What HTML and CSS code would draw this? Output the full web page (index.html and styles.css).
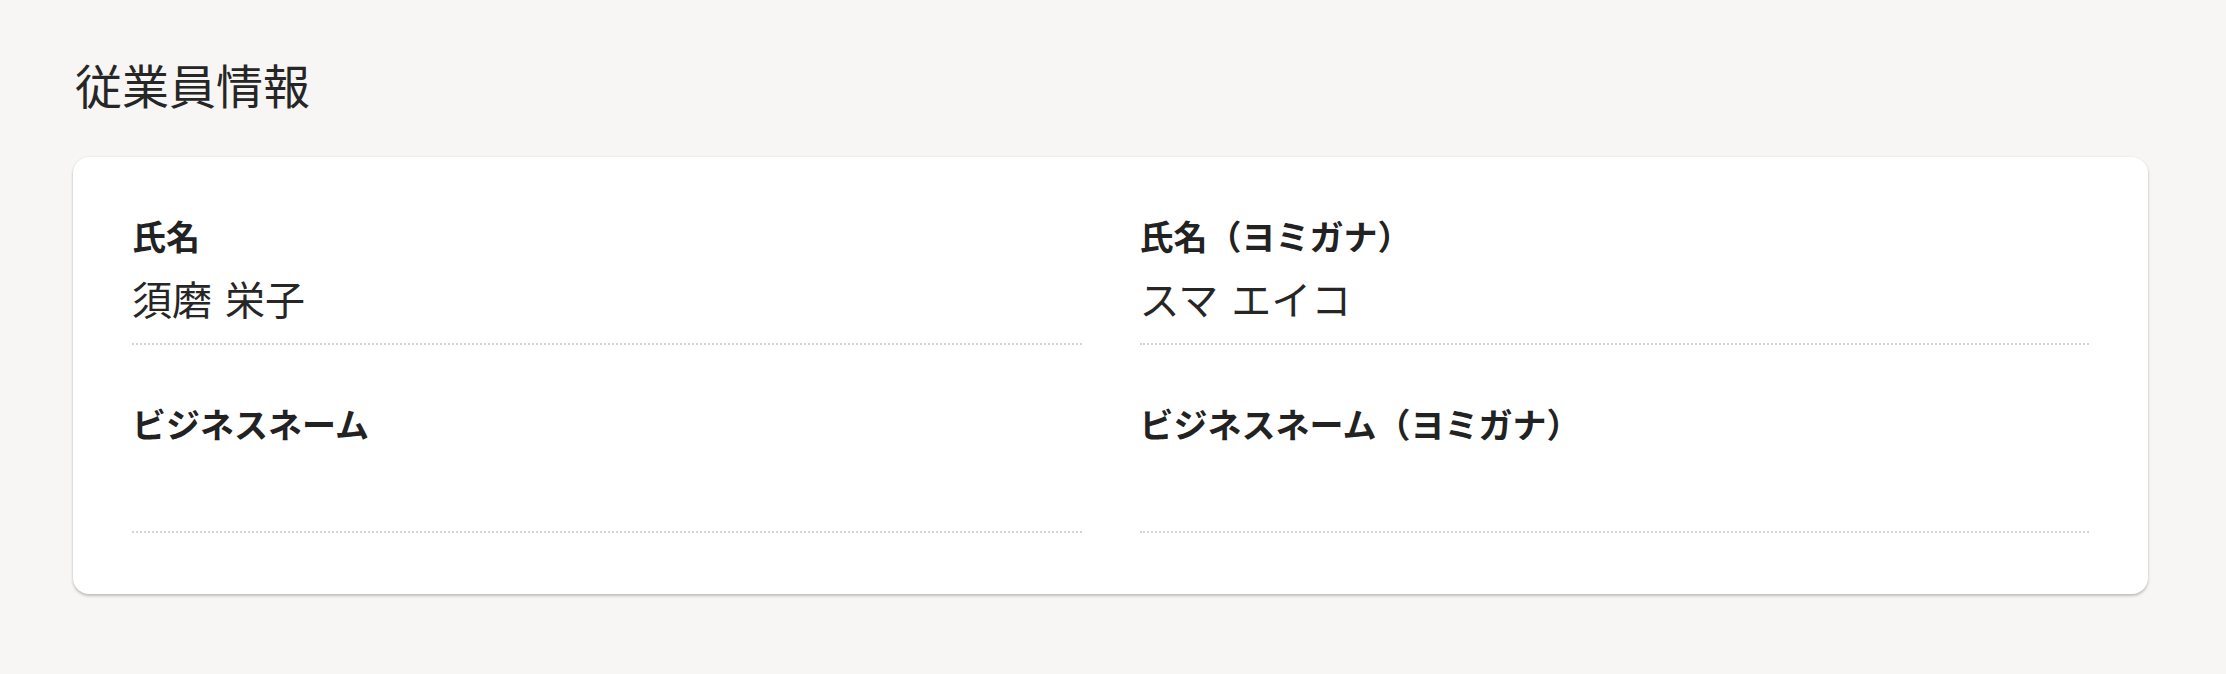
FILE: index.html
```html
<!DOCTYPE html>
<html lang="ja">
<head>
<meta charset="utf-8">
<title>従業員情報</title>
<link rel="stylesheet" href="styles.css">
</head>
<body>
<main class="page">
  <h1 class="page-title">従業員情報</h1>
  <section class="card">
    <div class="field">
      <div class="field-label">氏名</div>
      <div class="field-value">須磨 栄子</div>
    </div>
    <div class="field">
      <div class="field-label">氏名（ヨミガナ）</div>
      <div class="field-value">スマ エイコ</div>
    </div>
    <div class="field">
      <div class="field-label">ビジネスネーム</div>
      <div class="field-value"></div>
    </div>
    <div class="field">
      <div class="field-label">ビジネスネーム（ヨミガナ）</div>
      <div class="field-value"></div>
    </div>
  </section>
</main>
</body>
</html>
```

FILE: styles.css
```css
html, body {
  margin: 0;
  padding: 0;
  background: #f7f6f5;
}

body {
  font-family: "Noto Sans CJK JP", "Noto Sans", sans-serif;
  color: #232323;
}

.page {
  padding: 49px 78px 40px 73px;
}

.page-title {
  margin: 0 0 38px 2px;
  font-size: 47px;
  line-height: 70px;
  font-weight: 400;
  color: #262626;
}

.card {
  width: 2075px;
  box-sizing: border-box;
  background: #ffffff;
  border-radius: 16px;
  box-shadow: 0 2px 3px rgba(0, 0, 0, 0.22), 0 0 2px rgba(0, 0, 0, 0.08);
  padding: 0 59px 61px 59px;
  display: grid;
  grid-template-columns: 1fr 1fr;
  column-gap: 58px;
}

.field {
  padding: 53px 0 16px 0;
  border-bottom: 2px dotted #d4d4d4;
}

.field-label {
  font-size: 34px;
  line-height: 51px;
  font-weight: 700;
  color: #222222;
}

.field-value {
  margin-top: 8px;
  font-size: 40px;
  line-height: 58px;
  min-height: 58px;
  font-weight: 400;
  word-spacing: 4px;
  color: #262626;
}
```
